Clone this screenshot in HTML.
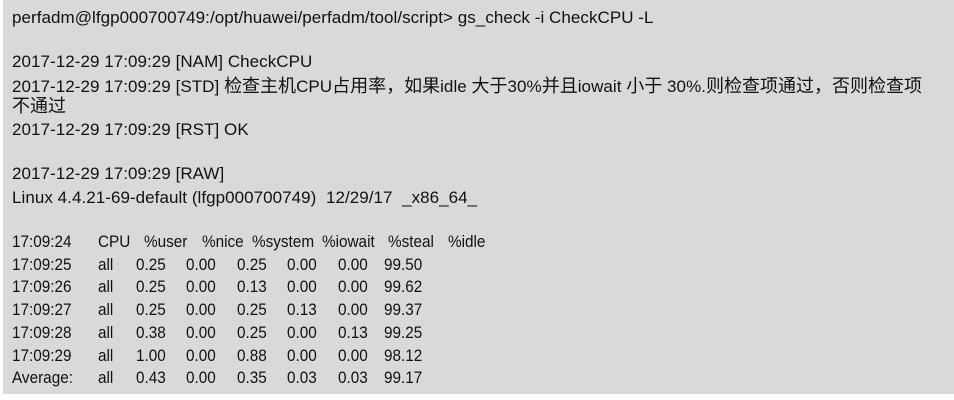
<!DOCTYPE html>
<html><head><meta charset="utf-8"><style>
html,body{margin:0;padding:0;background:#fff;width:954px;height:400px;overflow:hidden}
#box{position:absolute;left:3px;top:0;width:951px;height:394px;background:#d9d9d9}
.l{position:absolute;left:12px;font-family:"Liberation Sans","Noto Sans CJK SC",sans-serif;font-size:17px;color:#111;white-space:nowrap;line-height:20px;letter-spacing:0.05px}
.c{font-size:18px;letter-spacing:0}
.t{position:absolute;font-family:"Liberation Sans",sans-serif;font-size:17px;color:#111;white-space:nowrap;line-height:20px;transform:scaleX(0.9);transform-origin:0 0}
</style></head><body>
<div id="box"></div>
<div class="l" style="top:8px">perfadm@lfgp000700749:/opt/huawei/perfadm/tool/script&gt; gs_check -i CheckCPU -L</div>
<div class="l" style="top:52px">2017-12-29 17:09:29 [NAM] CheckCPU</div>
<div class="l" style="top:76px">2017-12-29 17:09:29 [STD] <span class="c">检查主机</span>CPU<span class="c">占用率，如果</span>idle <span class="c">大于</span>30%<span class="c">并且</span>iowait <span class="c">小于</span> 30%.<span class="c">则检查项通过，否则检查项</span></div>
<div class="l" style="top:96px"><span class="c">不通过</span></div>
<div class="l" style="top:120px">2017-12-29 17:09:29 [RST] OK</div>
<div class="l" style="top:164px">2017-12-29 17:09:29 [RAW]</div>
<div class="l" style="top:188px">Linux 4.4.21-69-default (lfgp000700749)&nbsp; 12/29/17&nbsp; _x86_64_</div>
<div id="tbl"></div>
<script>
var rows=[["17:09:24","CPU","%user","%nice","%system","%iowait","%steal","%idle"],
["17:09:25","all","0.25","0.00","0.25","0.00","0.00","99.50"],
["17:09:26","all","0.25","0.00","0.13","0.00","0.00","99.62"],
["17:09:27","all","0.25","0.00","0.25","0.13","0.00","99.37"],
["17:09:28","all","0.38","0.00","0.25","0.00","0.13","99.25"],
["17:09:29","all","1.00","0.00","0.88","0.00","0.00","98.12"],
["Average:","all","0.43","0.00","0.35","0.03","0.03","99.17"]];
var hx=[12,98,144,202,252,322,388,448],vx=[12,98,136,186,237,287,338,384];
var h="";
rows.forEach(function(r,i){var y=232+i*22.7;r.forEach(function(c,j){h+='<div class="t" style="left:'+(i==0?hx[j]:vx[j])+'px;top:'+y+'px">'+c+'</div>';});});
document.getElementById("tbl").innerHTML=h;
</script>
</body></html>
